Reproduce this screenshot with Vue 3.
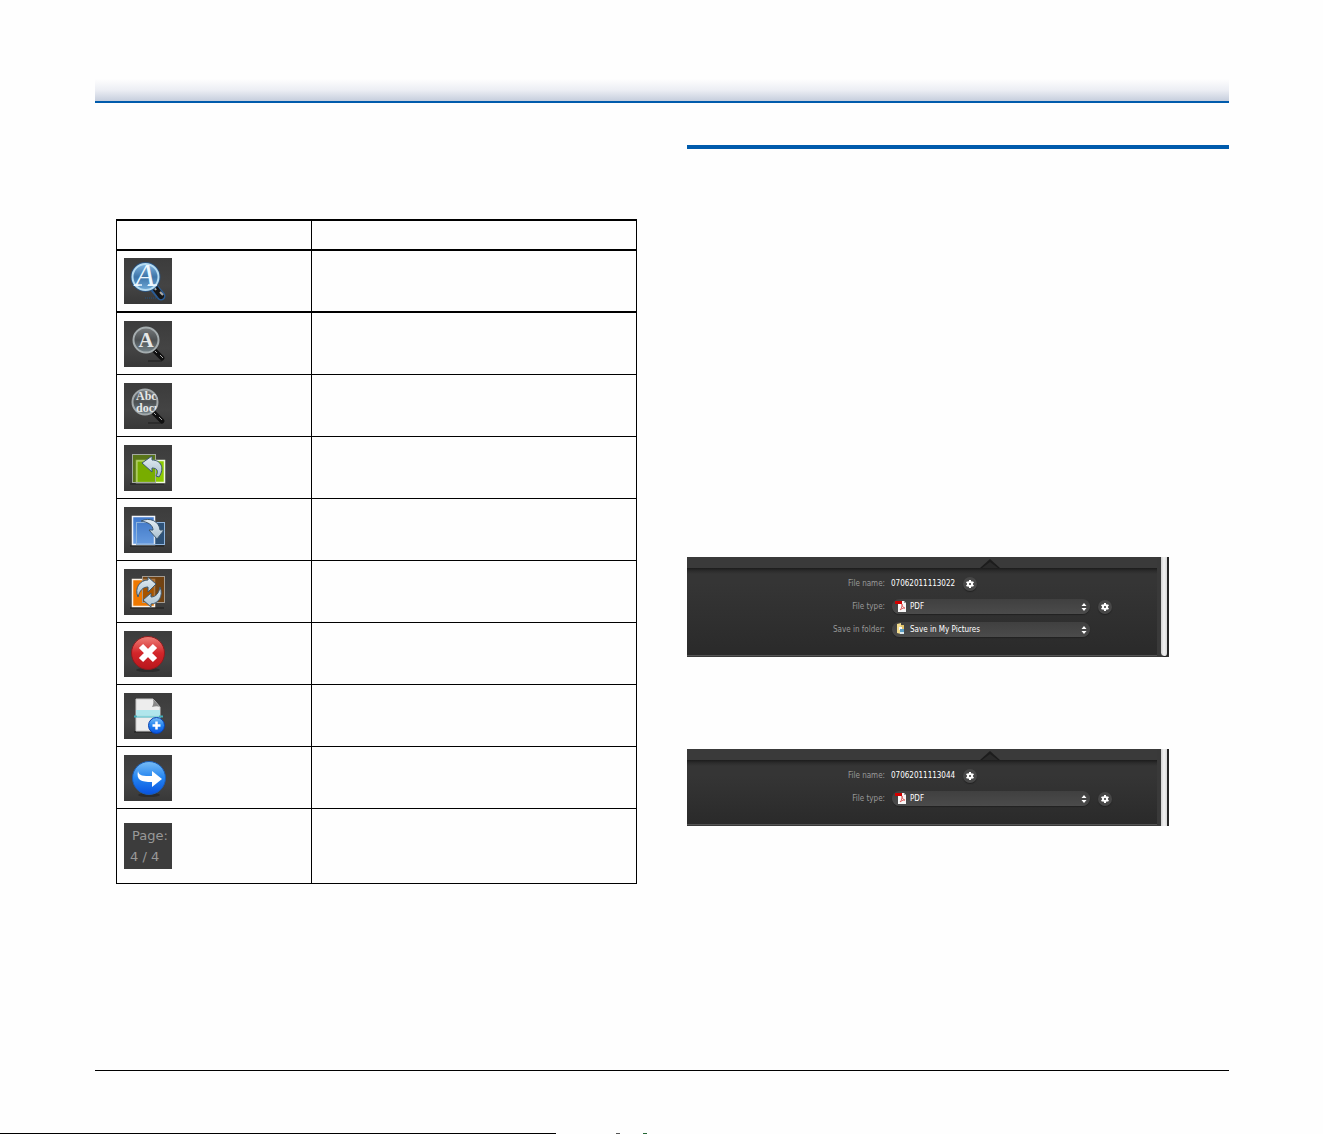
<script setup>
import { ref } from "vue";

const icons = [
  "recognized",
  "recognize",
  "zoom",
  "rotate-left",
  "rotate-right",
  "rotate-both",
  "delete",
  "add-page",
  "continue",
  "page",
];

const panels = ref([
  { id: "folder", name: "07062011113022", type: "PDF", folder: "Save in My Pictures" },
  { id: "plain", name: "07062011113044", type: "PDF", folder: "" },
]);
</script>

<template>
  <div class="page">
    <svg class="defs" width="0" height="0" aria-hidden="true">
      <defs>
        <linearGradient id="tile" x1="0" y1="0" x2="0" y2="1">
          <stop offset="0" stop-color="#3c3c3c" />
          <stop offset="0.6" stop-color="#444" />
          <stop offset="1" stop-color="#383838" />
        </linearGradient>
        <linearGradient id="glass-blue" x1="0" y1="0" x2="0" y2="1">
          <stop offset="0" stop-color="#7fb4e0" />
          <stop offset="0.5" stop-color="#3d74a8" />
          <stop offset="1" stop-color="#6fa9d6" />
        </linearGradient>
        <linearGradient id="glass-grey" x1="0" y1="0" x2="0" y2="1">
          <stop offset="0" stop-color="#777b7d" />
          <stop offset="0.5" stop-color="#4c5052" />
          <stop offset="1" stop-color="#75848a" />
        </linearGradient>
        <linearGradient id="arrow" x1="0" y1="0" x2="0" y2="1">
          <stop offset="0" stop-color="#e4edf3" />
          <stop offset="1" stop-color="#a9c0d0" />
        </linearGradient>
        <linearGradient id="red" x1="0" y1="0" x2="0" y2="1">
          <stop offset="0" stop-color="#ee8078" />
          <stop offset="0.5" stop-color="#d3262a" />
          <stop offset="1" stop-color="#b8161c" />
        </linearGradient>
        <linearGradient id="blue" x1="0" y1="0" x2="0" y2="1">
          <stop offset="0" stop-color="#78bdf6" />
          <stop offset="0.5" stop-color="#2384f0" />
          <stop offset="1" stop-color="#0852e0" />
        </linearGradient>
        <linearGradient id="sheet-blue" x1="0" y1="0" x2="0" y2="1">
          <stop offset="0" stop-color="#3f78cc" />
          <stop offset="1" stop-color="#6da2e8" />
        </linearGradient>
        <clipPath id="lens">
          <circle cx="21" cy="19" r="13" />
        </clipPath>
      </defs>
    </svg>

    <header class="page-header"></header>

    <main class="columns">
      <section class="left">
        <table class="icon-table">
          <colgroup>
            <col class="col-icon" />
            <col />
          </colgroup>
          <thead>
            <tr>
              <th></th>
              <th></th>
            </tr>
          </thead>
          <tbody>
            <tr v-for="icon in icons" :key="icon">
              <td>
                <div v-if="icon === 'page'" class="tile page-count">
                  <span>Page:</span>
                  <span>4 / 4</span>
                </div>
                <svg v-else class="tile" viewBox="0 0 48 46">
                  <rect width="48" height="46" fill="url(#tile)" />
                  <g v-if="icon === 'recognized'">
                    <path d="M31 31l6 7" stroke="#2a5c96" stroke-width="9" stroke-linecap="round" />
                    <path d="M21 40h14" stroke="#205080" stroke-dasharray="1 1" />
                    <path d="M31 30l6 8" stroke="#161616" stroke-width="6" stroke-linecap="round" />
                    <path d="M30 29l2 3M36 34l3 3" stroke="#aaa" stroke-width="2" />
                    <circle cx="21.5" cy="19" r="15" fill="#2b5482" />
                    <circle cx="21.5" cy="19" r="13" fill="url(#glass-blue)" stroke="#b6dcf2" stroke-width="2" />
                    <path d="M10 27h8M24 27h9" stroke="#eef8ff" stroke-width="1.5" />
                    <text x="21" y="28" class="glyph letter-big">A</text>
                  </g>
                  <g v-else-if="icon === 'recognize'">
                    <path d="M24 40h14" stroke="#2c2c2c" stroke-width="2" />
                    <path d="M31 30l7 7" stroke="#101010" stroke-width="5" stroke-linecap="round" />
                    <path d="M31 30l2 2M36 34l3 3" stroke="#aaa" stroke-width="1" />
                    <circle cx="22" cy="19" r="12.5" fill="url(#glass-grey)" stroke="#a5adaf" stroke-width="2" />
                    <text x="22" y="26" class="glyph letter">A</text>
                  </g>
                  <g v-else-if="icon === 'zoom'">
                    <path d="M24 40h14" stroke="#2c2c2c" stroke-width="2" />
                    <path d="M30 30l8 8" stroke="#101010" stroke-width="5" stroke-linecap="round" />
                    <path d="M30 30l2 2M35 34l3 3" stroke="#aaa" stroke-width="1" />
                    <circle cx="21" cy="19" r="12.5" fill="url(#glass-grey)" stroke="#a3a9ab" stroke-width="2" />
                    <g clip-path="url(#lens)">
                      <text x="12" y="17" class="glyph words">Abcc</text>
                      <text x="12" y="29" class="glyph words">docu</text>
                    </g>
                  </g>
                  <g v-else-if="icon === 'rotate-left'">
                    <path d="M6 39h34" stroke="#2c2c2c" stroke-width="2" />
                    <rect x="12.5" y="15.5" width="28" height="22" fill="#8dcb00" stroke="#eef8de" stroke-width="1.5" />
                    <rect x="8.5" y="9.5" width="23" height="28" fill="#6b9900" fill-opacity="0.6" stroke="#a4aba0" />
                    <path d="M13 37V16h18" fill="none" stroke="#b8d66d" />
                    <path d="M18 18l10-7v4c9 0 13 8 7 17l-3-1c3-5 1-8-4-8v4z" fill="url(#arrow)" stroke="#3d5870" />
                  </g>
                  <g v-else-if="icon === 'rotate-right'">
                    <path d="M6 39h34" stroke="#2c2c2c" stroke-width="2" />
                    <rect x="31" y="16" width="9" height="21" fill="#2f5276" />
                    <rect x="8.5" y="9.5" width="22" height="28" fill="url(#sheet-blue)" stroke="#f2f6fc" stroke-width="1.5" />
                    <rect x="12.5" y="15.5" width="28" height="22" fill="#2a5d8e" fill-opacity="0.1" stroke="#8fb4dc" />
                    <path d="M17 14c9-4 18 0 19 9h4l-7 9-8-9h4c0-5-5-8-12-9z" fill="url(#arrow)" stroke="#3d5870" />
                  </g>
                  <g v-else-if="icon === 'rotate-both'">
                    <path d="M6 39h34" stroke="#2c2c2c" stroke-width="2" />
                    <rect x="8.5" y="10.5" width="22" height="27" fill="#ee7800" stroke="#faf1e6" stroke-width="1.5" />
                    <rect x="18.5" y="7.5" width="22" height="26" fill="#884400" fill-opacity="0.7" stroke="#a59b90" />
                    <path d="M14 28c-4-9 2-17 10-17V8l8 7-8 8v-5c-5 0-8 3-10 10z" fill="url(#arrow)" stroke="#3d5870" />
                    <path d="M36 18c4 9-2 17-9 17v3l-8-7 8-7v4c5 0 8-4 9-10z" fill="url(#arrow)" stroke="#3d5870" />
                  </g>
                  <g v-else-if="icon === 'delete'">
                    <ellipse cx="24" cy="39" rx="12" ry="2" fill="#2c2c2c" />
                    <circle cx="24" cy="22" r="16.5" fill="url(#red)" stroke="#8e1b1e" />
                    <path d="M17 15l14 14M31 15l-14 14" stroke="#fff" stroke-width="6" />
                  </g>
                  <g v-else-if="icon === 'add-page'">
                    <path d="M10 39h26" stroke="#2c2c2c" stroke-width="2" />
                    <path d="M12 6h17l7 8v24H12z" fill="#ededed" stroke="#c9c9c9" />
                    <path d="M29 6c1 4 0 6-1 8 3-1 6-1 8 0z" fill="#888" />
                    <rect x="12" y="17" width="24" height="5" fill="#b0e6ec" />
                    <path d="M10 23.5h29" stroke="#43aebb" stroke-width="2" />
                    <path d="M13 23h22" stroke="#c6f5f8" />
                    <circle cx="32.5" cy="32.5" r="8" fill="url(#blue)" stroke="#0940b0" />
                    <path d="M32.5 28.5v8M28.500 32.500h8" stroke="#fff" stroke-width="2.5" />
                  </g>
                  <g v-else>
                    <ellipse cx="25" cy="40" rx="11" ry="2" fill="#2c2c2c" />
                    <circle cx="25" cy="23" r="16.5" fill="url(#blue)" stroke="#1b5cb4" />
                    <path d="M14 16c1 5 5 5 14 5v-5l10 8-10 8v-5c-11 0-16-2-14-11z" fill="#fff" />
                  </g>
                </svg>
              </td>
              <td></td>
            </tr>
          </tbody>
        </table>
      </section>

      <section class="right">
        <form v-for="panel in panels" :key="panel.id" class="panel" @submit.prevent>
          <div class="panel-body">
            <div class="strip">
              <svg class="notch" viewBox="0 0 20 9">
                <path d="M0 9L10 0l10 9z" fill="#1c1c1c" />
                <path d="M2 9l8-6 8 6z" fill="#2a2a2a" />
              </svg>
            </div>
            <div class="fields">
              <div class="field">
                <label :for="panel.id + '-name'">File name:</label>
                <input :id="panel.id + '-name'" v-model="panel.name" type="text" />
                <button type="button" class="gear" aria-label="File name settings">
                  <svg viewBox="0 0 14 14">
                    <path d="M7 3v8M3.5 5l7 4M10.5 5l-7 4" stroke="#fff" stroke-width="2" />
                    <circle cx="7" cy="7" r="3" fill="#fff" />
                    <circle cx="7" cy="7" r="1" fill="#333" />
                  </svg>
                </button>
              </div>
              <div class="field">
                <label :for="panel.id + '-type'">File type:</label>
                <div class="dropdown">
                  <select :id="panel.id + '-type'" v-model="panel.type">
                    <option>PDF</option>
                  </select>
                  <svg class="kind" viewBox="0 0 12 12">
                    <path d="M3 1h6l2 2v9H3z" fill="#f6f6f6" />
                    <path d="M9 1v2h2z" fill="#999" />
                    <path d="M5 10c2-2 2-4 2-6 0 3 2 4 3 4-2 0-4 1-5 2z" fill="none" stroke="#e06060" />
                    <rect x="0" y="1" width="7" height="3" fill="#d00000" />
                  </svg>
                  <svg class="updown" viewBox="0 0 6 10">
                    <path d="M3 1l2.500 3h-5zM3 9L.5 6h5z" fill="#fff" />
                  </svg>
                </div>
                <button type="button" class="gear" aria-label="File type settings">
                  <svg viewBox="0 0 14 14">
                    <path d="M7 3v8M3.5 5l7 4M10.5 5l-7 4" stroke="#fff" stroke-width="2" />
                    <circle cx="7" cy="7" r="3" fill="#fff" />
                    <circle cx="7" cy="7" r="1" fill="#333" />
                  </svg>
                </button>
              </div>
              <div v-if="panel.folder" class="field">
                <label :for="panel.id + '-folder'">Save in folder:</label>
                <div class="dropdown">
                  <select :id="panel.id + '-folder'" v-model="panel.folder">
                    <option>Save in My Pictures</option>
                  </select>
                  <svg class="kind" viewBox="0 0 12 12">
                    <path d="M2 1l4-1v11l-4-1z" fill="#f3dc8d" />
                    <path d="M6 2h3v9H6z" fill="#e3c36a" />
                    <path d="M4 4h3v3H4z" fill="#f5faff" />
                    <path d="M5 6h4v5H5z" fill="#5b9dc4" />
                    <path d="M5 9h4v2H5z" fill="#dceaf0" />
                  </svg>
                  <svg class="updown" viewBox="0 0 6 10">
                    <path d="M3 1l2.500 3h-5zM3 9L.5 6h5z" fill="#fff" />
                  </svg>
                </div>
              </div>
            </div>
          </div>
          <div class="scrollbar" :class="{ ended: panel.folder }"></div>
        </form>
      </section>
    </main>

    <footer class="page-footer"></footer>
    <div class="bottom-edge">
      <span class="line"></span>
      <span class="dash"></span>
      <span class="dot"></span>
    </div>
  </div>
</template>

<style>
body {
  background: #fefefe;
}
</style>

<style scoped>
.page {
  box-sizing: border-box;
  display: flex;
  flex-direction: column;
  min-height: 100vh;
  padding-top: 79px;
  font-family: "DejaVu Sans Condensed", "DejaVu Sans", sans-serif;
}

.defs {
  position: absolute;
}

.page-header {
  height: 22px;
  margin: 0 94px 0 95px;
  background: linear-gradient(#fefefe, #eceef4 50%, #c6cedd);
  border-bottom: 2px solid #005bac;
}

.columns {
  display: grid;
  grid-template-columns: 1fr 1fr;
  gap: 50px;
  margin: 42px 94px 0 95px;
}

.left {
  padding: 74px 0 0 21px;
}

.icon-table {
  width: 100%;
  table-layout: fixed;
  border-collapse: separate;
  border-spacing: 0;
  border-top: 2px solid #000;
  border-left: 1px solid #000;
}

.col-icon {
  width: 195px;
}

.icon-table th,
.icon-table td {
  box-sizing: border-box;
  height: 62px;
  padding: 0 7px;
  border-right: 1px solid #000;
  border-bottom: 1px solid #000;
  vertical-align: middle;
}

.icon-table th {
  height: 30px;
  border-bottom-width: 2px;
}

.icon-table tbody tr:first-child td {
  border-bottom-width: 2px;
}

.icon-table tbody tr:last-child td {
  height: 75px;
}

.tile {
  display: block;
  width: 48px;
  height: 46px;
}

.glyph {
  font-family: "Liberation Serif", serif;
  fill: #e6e8e8;
  text-anchor: middle;
}

.letter-big {
  font-size: 32px;
  font-style: italic;
  fill: #eef8ff;
}

.letter {
  font-size: 21px;
  font-weight: bold;
}

.words {
  font-size: 12px;
  font-weight: bold;
  text-anchor: start;
}

.page-count {
  box-sizing: border-box;
  display: flex;
  flex-direction: column;
  padding: 2px 0 0 6px;
  background: #3c3c3c;
  color: #999;
  font-family: "DejaVu Sans", sans-serif;
  font-size: 13px;
  line-height: 21px;
}

.page-count span:first-child {
  padding-left: 2px;
}

.right {
  border-top: 4px solid #005bac;
}

.panel {
  display: flex;
  margin: 408px 60px 0 0;
  background: #393939;
}

.panel + .panel {
  margin-top: 92px;
}

.panel-body {
  flex: 1;
  margin-right: 4px;
  padding-bottom: 1px;
}

.strip {
  position: relative;
  height: 11px;
  background: #3a3a3a;
}

.notch {
  position: absolute;
  left: 293px;
  bottom: 0;
  width: 20px;
  height: 9px;
}

.fields {
  padding: 4px 0 14px;
  border-bottom: 1px solid #545454;
  background: linear-gradient(#1c1c1c, #2c2c2c 3px, #353535 6px, #353535 15px, #2a2a2a);
}

.field {
  display: flex;
  align-items: center;
  height: 23px;
}

.field label {
  width: 198px;
  margin-right: 6px;
  color: #999;
  font-size: 8px;
  line-height: 12px;
  text-align: right;
}

.field input {
  width: 66px;
  margin: 0 6px 0 0;
  padding: 0;
  border: 0;
  outline: 0;
  background: transparent;
  color: #fff;
  font-family: inherit;
  font-size: 8px;
  line-height: 12px;
}

.dropdown {
  position: relative;
  width: 198px;
  height: 15px;
  margin: 0 8px 0 1px;
}

.dropdown select {
  box-sizing: border-box;
  display: block;
  width: 100%;
  height: 15px;
  padding: 0 16px 0 18px;
  border: 0;
  border-radius: 8px;
  appearance: none;
  background: linear-gradient(#404040, #4b4b4b);
  box-shadow: 0 1px 1px #222;
  color: #fff;
  font-family: inherit;
  font-size: 8px;
}

.kind {
  position: absolute;
  left: 3px;
  top: 1px;
  width: 12px;
  height: 12px;
}

.updown {
  position: absolute;
  right: 3px;
  top: 3px;
  width: 6px;
  height: 10px;
}

.gear {
  width: 14px;
  height: 14px;
  padding: 0;
  border: 0;
  border-radius: 50%;
  background: #484848;
  box-shadow: 0 1px 1px #222;
}

.gear svg {
  display: block;
  width: 14px;
  height: 14px;
}

.scrollbar {
  width: 6px;
  border-right: 2px solid #252525;
  background: linear-gradient(90deg, #d0d0d0, #f2f2f2 50%, #d8d8d8);
}

.scrollbar.ended {
  border-bottom: 1px solid #252525;
  border-radius: 0 0 4px 4px;
}

.page-footer {
  margin: auto 94px 62px 95px;
  border-bottom: 1px solid #000;
}

.bottom-edge {
  display: flex;
  height: 1px;
}

.line {
  width: 42%;
  background: #000;
}

.dash {
  width: 4px;
  margin-left: 60px;
  background: #555;
}

.dot {
  width: 4px;
  margin-left: 23px;
  background: #263;
}
</style>
